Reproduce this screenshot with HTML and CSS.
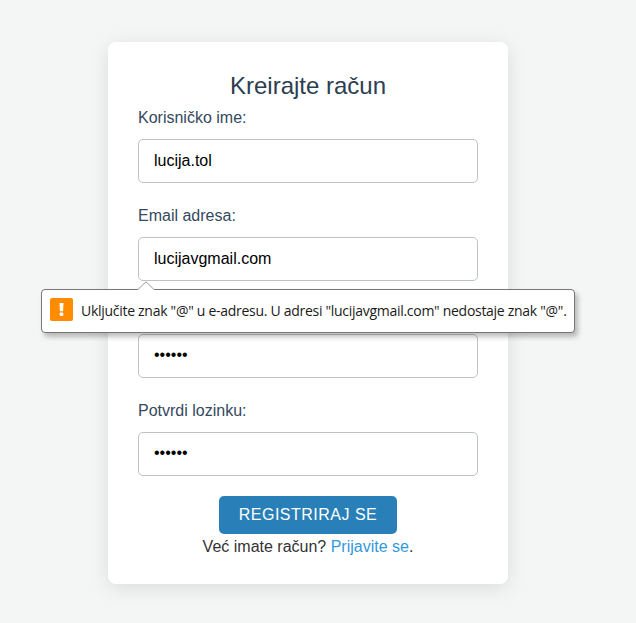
FILE: index.html
```html
<!DOCTYPE html>
<html lang="hr">
<head>
<meta charset="utf-8">
<title>Kreirajte račun</title>
<link rel="stylesheet" href="styles.css">
</head>
<body>
<main class="card">
  <h2 class="title">Kreirajte račun</h2>
  <form class="form" novalidate>
    <div class="field">
      <label class="label" for="username">Korisničko ime:</label>
      <input class="input" id="username" type="text" value="lucija.tol">
    </div>
    <div class="field">
      <label class="label" for="email">Email adresa:</label>
      <input class="input" id="email" type="text" value="lucijavgmail.com">
      <div class="tooltip" role="alert">
        <svg class="tooltip-arrow" width="18" height="10" viewBox="0 0 18 10">
          <path d="M0.5 10V9L1 8.5L9 0.8L17 8.5L17.5 9V10Z" fill="#fff"/>
          <path d="M1 8.5L9 0.8L17 8.5" fill="none" stroke="#999" stroke-width="1"/>
        </svg>
        <svg class="tooltip-icon" width="23" height="23" viewBox="0 0 23 23">
          <rect width="23" height="23" rx="2" fill="#ff8c00"/>
          <path d="M9.5 5h4l-.4 8.2h-3.2z" fill="#fff"/>
          <rect x="9.7" y="14.6" width="3.6" height="3.4" rx="1" fill="#fff"/>
        </svg>
        <span class="tooltip-text">Uključite znak "@" u e-adresu. U adresi "lucijavgmail.com" nedostaje znak "@".</span>
      </div>
    </div>
    <div class="field">
      <div class="label"></div>
      <input class="input input-password" type="password" value="lozink">
    </div>
    <div class="field">
      <label class="label" for="confirm">Potvrdi lozinku:</label>
      <input class="input input-password" id="confirm" type="password" value="lozink">
    </div>
    <button class="submit" type="button">REGISTRIRAJ SE</button>
  </form>
  <p class="login">Već imate račun? <a class="link" href="#">Prijavite se</a>.</p>
</main>
</body>
</html>
```

FILE: styles.css
```css
* {
  box-sizing: border-box;
}

body {
  margin: 0;
  height: 623px;
  padding-top: 42px;
  background: #f4f6f6;
  color: #333;
  font: 16px/24px "Liberation Sans", Arial, sans-serif;
  overflow: hidden;
}

.card {
  width: 400px;
  height: 542px;
  margin: 0 auto 0 108px;
  padding: 30px;
  background: #fff;
  border-radius: 8px;
  box-shadow: 0 4px 20px rgba(0, 0, 0, 0.1);
}

.title {
  margin: 0;
  color: #2c3e50;
  font-size: 24px;
  font-weight: 400;
  line-height: 28px;
  height: 33px;
  text-align: center;
}

.form {
  display: flex;
  flex-direction: column;
}

.field {
  position: relative;
  display: flex;
  flex-direction: column;
  height: 97.6px;
}

.label {
  height: 24px;
  padding-top: 1px;
  margin-bottom: 10px;
  color: #34495e;
}

.input {
  width: 100%;
  height: 44px;
  padding: 0 15px;
  border: 1px solid #bdc3c7;
  border-radius: 5px;
  background: #fff;
  color: #000;
  font: inherit;
}

.input-password {
  padding-bottom: 2px;
}

.submit {
  align-self: center;
  width: 178px;
  height: 38px;
  margin-top: 0.6px;
  padding: 0;
  border: 0;
  border-radius: 5px;
  background: #2980b9;
  color: #fff;
  font: inherit;
  letter-spacing: 0.5px;
}

.login {
  margin: 1px 0 0;
  text-align: center;
}

.link {
  color: #3498db;
  text-decoration: none;
}

/* Validation bubble anchored under the email input */
.tooltip {
  position: absolute;
  z-index: 2;
  left: -97px;
  top: 86.4px;
  display: flex;
  align-items: center;
  gap: 8px;
  width: 534px;
  height: 44px;
  padding-left: 8px;
  border: 1px solid #767676;
  border-radius: 4px;
  background: #fff;
  box-shadow: 3px 4px 5px rgba(0, 0, 0, 0.25);
}

.tooltip-arrow {
  position: absolute;
  left: 95px;
  top: -9px;
}

.tooltip-icon {
  flex: none;
  margin-top: -3px;
}

.tooltip-text {
  color: #1a1a1a;
  font: 14px/20px "Open Sans", "Noto Sans", sans-serif;
  letter-spacing: -0.285px;
  white-space: nowrap;
}
```
